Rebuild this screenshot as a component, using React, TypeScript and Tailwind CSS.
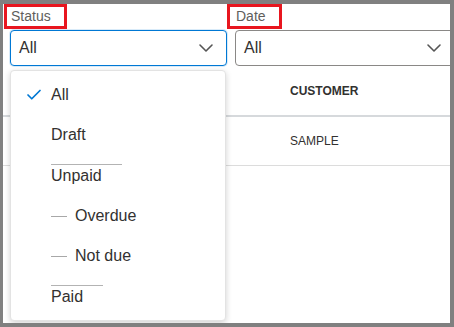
import { Check, ChevronDown } from 'lucide-react';

const items = [
  { label: 'All', checked: true },
  { label: 'Draft' },
  { label: 'Unpaid', divider: 'w-[71px]' },
  { label: 'Overdue', sub: true },
  { label: 'Not due', sub: true },
  { label: 'Paid', divider: 'w-[52px]' },
];

function Select({ focused, width }: { focused?: boolean; width: string }) {
  return (
    <div
      className={`flex items-center justify-between h-[36px] ${width} rounded-[4px] border bg-white pl-[8px] pr-[8px] text-[16px] text-[#323130] ${
        focused ? 'border-[#0078d4] shadow-[0_0_0_1px_rgba(0,120,212,0.15)]' : 'border-[#8a8886]'
      }`}
    >
      <span>All</span>
      <ChevronDown className="w-[24px] h-[24px] text-[#555]" strokeWidth={1.6} />
    </div>
  );
}

export default function App() {
  return (
    <div
      className="w-[454px] h-[327px] bg-white border-[#808080] border-l-[3px] border-t-4 border-r-4 border-b-4 overflow-hidden"
      style={{ fontFamily: '"Liberation Sans", Arial, sans-serif' }}
    >
      <div className="relative h-full overflow-hidden">
        <div className="flex">
          <div className="w-[224px] shrink-0">
            <div className="ml-[1px] w-[63px] h-[25px] border-[3px] border-[#e8161f] flex items-center pl-[4px] text-[14px] text-[#605e5c]">
              Status
            </div>
            <div className="ml-[7px] mt-[1px]">
              <Select focused width="w-[217px]" />
            </div>
          </div>
          <div className="shrink-0">
            <div className="w-[55px] h-[25px] border-[3px] border-[#e8161f] flex items-center pl-[6px] text-[14px] text-[#605e5c]">
              Date
            </div>
            <div className="ml-[8px] mt-[1px]">
              <Select width="w-[220px]" />
            </div>
          </div>
        </div>

        <div className="h-[51px] border-b-2 border-[#d6d9dc] flex items-center pl-[287px] text-[12px] font-bold text-[#323130]">
          CUSTOMER
        </div>
        <div className="h-[49px] border-b border-[#dcdcdc] flex items-center pl-[287px] text-[12px] text-[#323130]">
          SAMPLE
        </div>

        <div className="absolute left-[7px] top-[66px] w-[216px] h-[251px] rounded-[4px] border border-[#e3e3e3] bg-white shadow-[0_2px_6px_rgba(0,0,0,0.18)] pt-[4px]">
          {items.map((item) => (
            <div
              key={item.label}
              className={`${item.divider ? 'h-[41px]' : 'h-[40px]'} flex items-center text-[16px] text-[#323130]`}
            >
              <div className="w-[40px] shrink-0 flex justify-end">
                {item.checked && (
                  <Check className="w-[18px] h-[18px] text-[#0078d4] mr-[8px]" strokeWidth={2.3} />
                )}
              </div>
              {item.sub && <span className="w-[16px] h-px bg-[#a8a8a8] mr-[8px]" />}
              {item.divider ? (
                <span className={`${item.divider} -mt-[2px] border-t border-[#b3b3b3] pt-[1px] leading-[20px]`}>
                  {item.label}
                </span>
              ) : (
                <span>{item.label}</span>
              )}
            </div>
          ))}
        </div>
      </div>
    </div>
  );
}
